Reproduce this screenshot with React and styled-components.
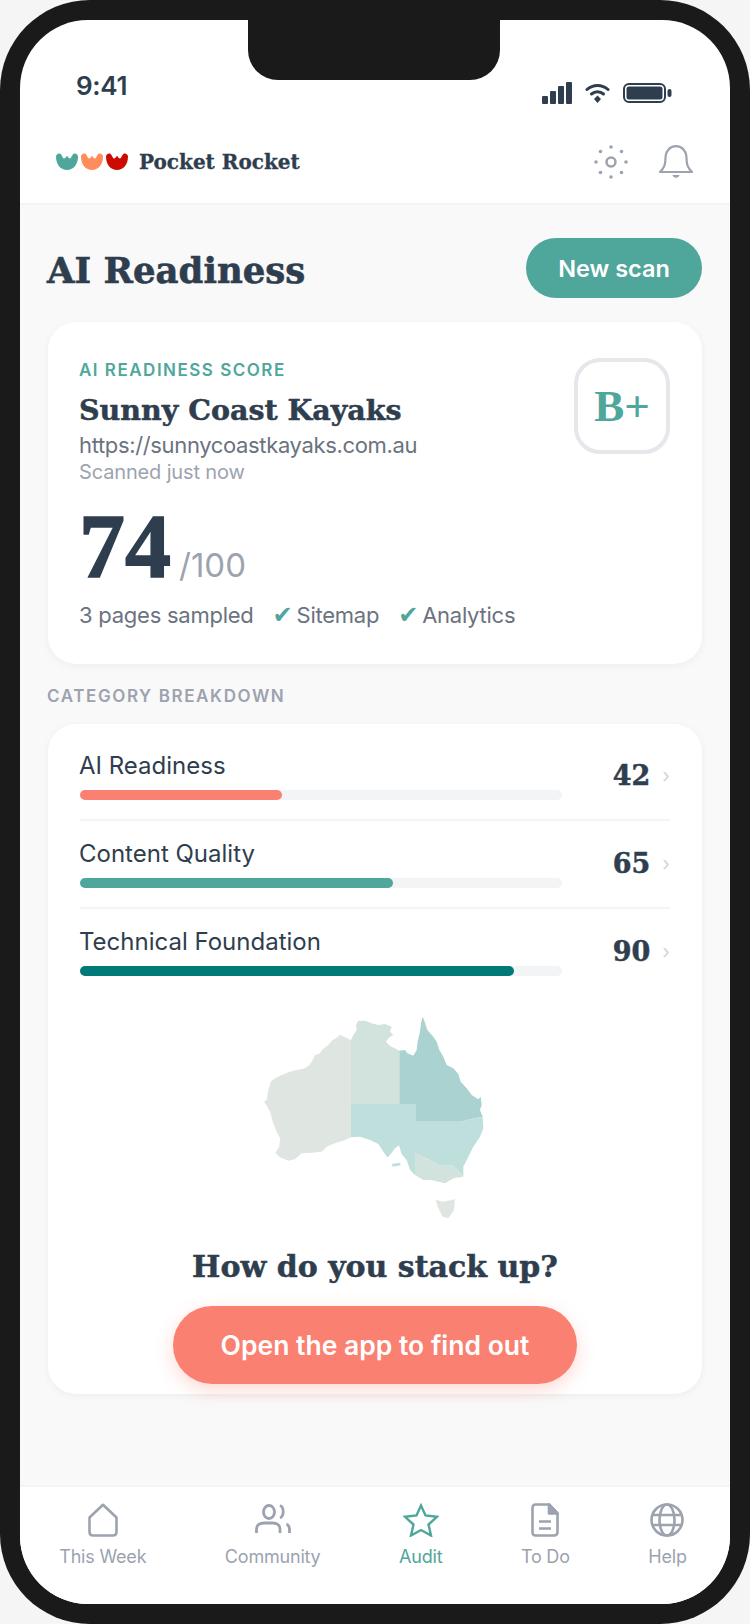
import React from 'react'
import styled, { createGlobalStyle } from 'styled-components'

const SANS = `"Inter", "Liberation Sans", sans-serif`
const SERIF = `"DejaVu Serif", "Liberation Serif", serif`
const TALL_SERIF = `"Liberation Serif", serif`
const INK = '#2f3e4e'
const TEAL = '#4fa69b'
const GRAY = '#9ca3af'

const Global = createGlobalStyle`
html, body { margin: 0; padding: 0; background: #f5f5f5; }
* { box-sizing: border-box; }
`

const Frame = styled.div`
width: 750px;
height: 1624px;
padding: 20px;
background: #1a1a1a;
border-radius: 90px;
position: relative;
`

const Notch = styled.div`
position: absolute;
top: 20px;
left: 248px;
width: 252px;
height: 60px;
background: #1a1a1a;
border-radius: 0 0 30px 30px;
`

const Screen = styled.div`
height: 100%;
background: #fff;
border-radius: 68px;
overflow: hidden;
display: flex;
flex-direction: column;
font-family: ${SANS};
color: ${INK};
`

const StatusBar = styled.div`
height: 100px;
flex: none;
display: flex;
justify-content: space-between;
align-items: flex-start;
padding: 50px 58px 0 56px;
`

const Time = styled.div`
font-size: 26px;
font-weight: 600;
line-height: 32px;
letter-spacing: -0.3px;
`

const StatusIcons = styled.div`
display: flex;
align-items: center;
gap: 13px;
margin-top: 12px;
height: 22px;
`

const Header = styled.header`
height: 85px;
flex: none;
display: flex;
align-items: center;
justify-content: space-between;
padding: 0 36px;
border-bottom: 2px solid #f3f4f6;
`

const Brand = styled.div`
display: flex;
align-items: center;
gap: 3px;
`

const BrandName = styled.span`
font-family: ${SERIF};
font-weight: 700;
font-size: 20px;
margin-left: 8px;
-webkit-text-stroke: 0.3px ${INK};
`

const HeaderIcons = styled.div`
display: flex;
align-items: center;
gap: 30px;
`

const Main = styled.main`
flex: 1;
background: #f9f9f9;
padding: 33px 28px 0;
`

const TitleRow = styled.div`
display: flex;
justify-content: space-between;
align-items: center;
`

const PageTitle = styled.h1`
margin: 5px 0 0 -1px;
font-family: ${SERIF};
font-size: 35.500px;
font-weight: 700;
line-height: 50px;
-webkit-text-stroke: 0.6px ${INK};
`

const ScanButton = styled.button`
width: 176px;
height: 60px;
border: none;
border-radius: 30px;
background: ${TEAL};
color: #fff;
font-family: ${SANS};
font-size: 23.500px;
font-weight: 600;
`

const Card = styled.section`
background: #fff;
border-radius: 28px;
box-shadow: 0 2px 8px rgba(0, 0, 0, 0.05);
`

const ScoreCard = styled(Card)`
margin-top: 24px;
height: 342px;
padding: 36px 32px 0 31px;
`

const ScoreTop = styled.div`
display: flex;
justify-content: space-between;
align-items: flex-start;
`

const Eyebrow = styled.div`
color: ${TEAL};
font-size: 17px;
font-weight: 600;
letter-spacing: 1.500px;
line-height: 24px;
`

const SiteName = styled.h2`
margin: 8px 0 0;
font-family: ${SERIF};
font-size: 28.500px;
font-weight: 700;
line-height: 40px;
-webkit-text-stroke: 0.5px ${INK};
`

const SiteUrl = styled.div`
color: #6b7280;
font-size: 22px;
letter-spacing: -0.35px;
line-height: 30px;
`

const Scanned = styled.div`
color: ${GRAY};
font-size: 20px;
letter-spacing: -0.15px;
line-height: 24px;
`

const Grade = styled.div`
width: 96px;
height: 96px;
flex: none;
display: flex;
align-items: center;
justify-content: center;
border: 4px solid #e5e7eb;
border-radius: 26px;
color: ${TEAL};
font-family: ${TALL_SERIF};
font-size: 45px;
font-weight: 700;
`

const ScoreLine = styled.div`
display: flex;
align-items: baseline;
gap: 8px;
margin-top: 18px;
height: 88px;
`

const ScoreValue = styled.span`
font-family: ${TALL_SERIF};
font-size: 92px;
font-weight: 700;
line-height: 88px;
-webkit-text-stroke: 1.500px ${INK};
`

const ScoreMax = styled.span`
color: ${GRAY};
font-size: 33px;
`

const Facts = styled.div`
display: flex;
gap: 22px;
margin-top: 10px;
color: #6b7280;
font-size: 22px;
letter-spacing: -0.25px;
line-height: 30px;
`

const Fact = styled.span`
display: inline-flex;
align-items: center;
`

const Check = styled.span`
color: ${TEAL};
font-family: "DejaVu Sans", sans-serif;
font-size: 24px;
width: 24px;
margin-left: -3px;
`

const SectionLabel = styled.div`
margin: 20px 0 16px -1px;
color: ${GRAY};
font-size: 17px;
font-weight: 600;
letter-spacing: 1.600px;
line-height: 24px;
`

const BreakdownCard = styled(Card)`
height: 670px;
padding: 9px 32px 10px;
display: flex;
flex-direction: column;
align-items: center;
`

const Row = styled.div`
width: 100%;
display: flex;
align-items: center;
padding: 18px 0 19px;
border-bottom: 2px solid ${props => (props.$last ? 'transparent' : '#f3f4f6')};
`

const RowMain = styled.div`
width: 482px;
flex: none;
`

const RowLabel = styled.div`
margin-left: -1px;
font-size: 24px;
line-height: 30px;
`

const Track = styled.div`
height: 10px;
margin-top: 9px;
background: #f3f4f6;
border-radius: 5px;
`

const Fill = styled.div`
height: 100%;
border-radius: 5px;
background: ${props => props.$color};
`

const RowScore = styled.div`
margin-left: auto;
font-family: ${SERIF};
font-size: 27px;
font-weight: 700;
-webkit-text-stroke: 0.5px ${INK};
`

const Chevron = styled.span`
margin-left: 12px;
color: #d1d5db;
font-size: 20px;
`

const AuMap = styled.svg`
display: block;
margin-top: 3px;
flex: none;
`

const StackTitle = styled.h3`
margin: 14px 0 0;
font-family: ${SERIF};
font-size: 30px;
font-weight: 700;
line-height: 46px;
-webkit-text-stroke: 0.5px ${INK};
`

const OpenButton = styled.button`
width: 404px;
height: 78px;
margin-top: 16px;
border: none;
border-radius: 39px;
background: #fa8072;
color: #fff;
font-family: ${SANS};
font-size: 26.500px;
font-weight: 600;
box-shadow: 0 6px 18px rgba(250, 128, 114, 0.3);
`

const TabBar = styled.nav`
height: 119px;
flex: none;
display: flex;
justify-content: space-around;
align-items: flex-start;
padding: 16px 4px 0 0;
background: #fff;
border-top: 2px solid #f3f4f6;
`

const Tab = styled.div`
display: flex;
flex-direction: column;
align-items: center;
gap: 8px;
font-size: 18px;
letter-spacing: -0.2px;
line-height: 24px;
color: ${props => (props.$active ? TEAL : GRAY)};
`

const Tulip = ({ color }) => (
  <svg width="22" height="17" viewBox="0 0 22 17">
    <path fill={color} d="M0 3.500C0 1.500 2 0 4 .5 6 1.500 6.500 5 8 5.500 9.500 5.500 10 3.500 11 3 12 3.500 12.500 5.500 14 5.500 15.500 5 16 1.500 18 .5 20 0 22 1.500 22 3.500 22 12 17 17 11 17 5 17 0 12 0 3.500Z" />
  </svg>
)

const SignalIcon = () => (
  <svg width="30" height="22" viewBox="0 0 30 22" fill={INK}>
    <rect x="0" y="14" width="6" height="8" rx="1" />
    <rect x="8" y="9" width="6" height="13" rx="1" />
    <rect x="16" y="4" width="6" height="18" rx="1" />
    <rect x="24" y="0" width="6" height="22" rx="1" />
  </svg>
)

const WifiIcon = () => (
  <svg width="25" height="20" viewBox="0 0 25 20" fill="none" stroke={INK} strokeWidth="3" strokeLinecap="round">
    <path d="M2 6.500C8 1 17 1 23 6.500" />
    <path d="M6.500 11C10 8 15 8 18.500 11" />
    <path fill={INK} stroke="none" d="M12.500 12.500 16 16 12.500 20 9 16Z" />
  </svg>
)

const BatteryIcon = () => (
  <svg width="49" height="20" viewBox="0 0 49 20">
    <rect x="1" y="1" width="41" height="18" rx="5" fill="none" stroke={INK} strokeWidth="2" />
    <rect x="3.500" y="3.500" width="36" height="13" rx="2.500" fill={INK} />
    <rect x="44.500" y="6" width="4" height="8" rx="2" fill={INK} />
  </svg>
)

const SunIcon = () => (
  <svg width="34" height="34" viewBox="0 0 34 34" fill={GRAY}>
    <circle cx="17" cy="17" r="4.500" fill="none" stroke={GRAY} strokeWidth="2.500" />
    <circle cx="17" cy="2" r="1.800" />
    <circle cx="17" cy="32" r="1.800" />
    <circle cx="2" cy="17" r="1.800" />
    <circle cx="32" cy="17" r="1.800" />
    <circle cx="6.500" cy="6.500" r="1.800" />
    <circle cx="27.500" cy="6.500" r="1.800" />
    <circle cx="6.500" cy="27.500" r="1.800" />
    <circle cx="27.500" cy="27.500" r="1.800" />
  </svg>
)

const BellIcon = () => (
  <svg width="36" height="34" viewBox="0 0 36 34" fill="none" stroke={GRAY} strokeWidth="2.200" strokeLinejoin="round">
    <path d="M2 27C6 23 7.500 20 7.500 13 7.500 6 12 1.200 18 1.200S28.500 6 28.500 13C28.500 20 30 23 34 27Z" />
    <path fill={GRAY} stroke="none" d="M14.500 30H21.500C21 33.500 15 33.500 14.500 30Z" />
  </svg>
)

const HomeIcon = ({ color }) => (
  <svg width="30" height="34" viewBox="0 0 30 34" fill="none" stroke={color} strokeWidth="2.600" strokeLinejoin="round">
    <path d="M15 1.800 28.500 14.500V29C28.500 31.500 27.500 32.500 25 32.500H5C2.500 32.500 1.500 31.500 1.500 29V14.500Z" />
  </svg>
)

const PeopleIcon = ({ color }) => (
  <svg width="36" height="34" viewBox="0 0 36 34" fill="none" stroke={color} strokeWidth="2.800">
    <ellipse cx="14" cy="9" rx="5.500" ry="6.500" />
    <path d="M1.500 30V26C1.500 22 5 20 9 20H18C22 20 25 22 25 26V30" />
    <path d="M25 2.500C29 4 29.500 13 25 15" />
    <path d="M34.500 30V26C34.500 24 33.500 22 31.500 21" />
  </svg>
)

const StarIcon = ({ color }) => (
  <svg width="36" height="34" viewBox="0 0 36 34" fill="none" stroke={color} strokeWidth="2.400">
    <path d="M18 2.500 22.500 12.500 34 13.800 25.500 21.500 28 32.500 18 27 8 32.500 10.500 21.500 2 13.800 13.500 12.500Z" />
  </svg>
)

const DocIcon = ({ color }) => (
  <svg width="28" height="34" viewBox="0 0 28 34" fill="none" stroke={color} strokeWidth="2.600" strokeLinejoin="round">
    <path d="M4.500 1.500H18L26.500 10.500V29C26.500 31.500 25.500 32.500 23 32.500H4.500C2.500 32.500 1.500 31.500 1.500 29V5C1.500 3 2.500 1.500 4.500 1.500Z" />
    <path fill={color} d="M18 1.500V10.500H26.500Z" />
    <path d="M8 18.500H20M8 25.500H20" />
  </svg>
)

const GlobeIcon = ({ color }) => (
  <svg width="34" height="34" viewBox="0 0 34 34" fill="none" stroke={color} strokeWidth="2.600">
    <circle cx="17" cy="17" r="15.500" />
    <ellipse cx="17" cy="17" rx="7.500" ry="15.500" />
    <path d="M2 12H32M2 22H32" />
  </svg>
)

// traced by hand from the reference, in 3x coordinates
const MAP_SHAPES = [
  ['#dfe6e1', '303,120 285,112 270,104 262,112 245,122 235,135 218,148 210,160 195,165 188,180 178,195 165,205 140,210 120,215 95,225 75,235 62,245 55,270 50,300 42,305 55,325 62,340 68,365 80,395 90,415 88,440 76,458 90,472 115,482 135,478 155,460 185,458 215,455 230,440 255,430 285,420 303,412'],
  ['#d2e3de', '303,120 310,105 320,90 318,75 325,62 345,62 365,70 385,75 405,72 425,80 420,95 430,105 418,112 408,125 420,138 440,148 448,152 448,312 303,312'],
  ['#a9d2d1', '448,152 465,150 472,160 490,167 500,150 503,125 510,95 513,70 518,50 524,65 532,90 548,108 560,125 568,150 580,170 590,195 610,205 625,222 632,245 650,265 665,285 685,298 692,290 695,315 690,330 698,350 660,358 630,365 498,365 498,312 448,312'],
  ['#bfdfdd', '303,312 498,312 498,365 630,365 660,358 698,350 700,385 690,410 670,440 655,470 640,500 640,530 610,497 570,497 540,480 495,460 495,525 480,510 470,480 455,462 447,436 435,445 420,465 412,472 400,455 385,432 360,420 330,410 303,412'],
  ['#d2e3de', '495,460 540,480 570,497 610,497 640,530 610,535 585,550 565,545 545,540 520,540 495,525'],
  ['#dfe6e1', '557,600 580,605 615,598 612,630 595,655 578,650 565,625'],
  ['#bfdfdd', '425,492 450,488 452,496 428,500'],
]

const categories = [
  { name: 'AI Readiness', score: 42, color: '#fa8072' },
  { name: 'Content Quality', score: 65, color: TEAL },
  { name: 'Technical Foundation', score: 90, color: '#007a78' },
]

const tabs = [
  { label: 'This Week', Icon: HomeIcon },
  { label: 'Community', Icon: PeopleIcon },
  { label: 'Audit', Icon: StarIcon, active: true },
  { label: 'To Do', Icon: DocIcon },
  { label: 'Help', Icon: GlobeIcon },
]

const App = () => (
  <>
    <Global />
    <Frame>
      <Screen>
        <StatusBar>
          <Time>9:41</Time>
          <StatusIcons>
            <SignalIcon />
            <WifiIcon />
            <BatteryIcon />
          </StatusIcons>
        </StatusBar>
        <Header>
          <Brand>
            <Tulip color={TEAL} />
            <Tulip color="#ff8c5a" />
            <Tulip color="#cc0a00" />
            <BrandName>Pocket Rocket</BrandName>
          </Brand>
          <HeaderIcons>
            <SunIcon />
            <BellIcon />
          </HeaderIcons>
        </Header>
        <Main>
          <TitleRow>
            <PageTitle>AI Readiness</PageTitle>
            <ScanButton>New scan</ScanButton>
          </TitleRow>
          <ScoreCard>
            <ScoreTop>
              <div>
                <Eyebrow>AI READINESS SCORE</Eyebrow>
                <SiteName>Sunny Coast Kayaks</SiteName>
                <SiteUrl>https://sunnycoastkayaks.com.au</SiteUrl>
                <Scanned>Scanned just now</Scanned>
              </div>
              <Grade>B+</Grade>
            </ScoreTop>
            <ScoreLine>
              <ScoreValue>74</ScoreValue>
              <ScoreMax>/100</ScoreMax>
            </ScoreLine>
            <Facts>
              <Fact>3 pages sampled</Fact>
              <Fact><Check>✔</Check>Sitemap</Fact>
              <Fact><Check>✔</Check>Analytics</Fact>
            </Facts>
          </ScoreCard>
          <SectionLabel>CATEGORY BREAKDOWN</SectionLabel>
          <BreakdownCard>
            {categories.map((c, i) => (
              <Row key={c.name} $last={i === categories.length - 1}>
                <RowMain>
                  <RowLabel>{c.name}</RowLabel>
                  <Track>
                    <Fill $color={c.color} style={{ width: `${c.score}%` }} />
                  </Track>
                </RowMain>
                <RowScore>{c.score}</RowScore>
                <Chevron>›</Chevron>
              </Row>
            ))}
            <AuMap width="250" height="230" viewBox="0 0 750 690">
              {MAP_SHAPES.map(([fill, points]) => (
                <polygon key={points} fill={fill} points={points} />
              ))}
            </AuMap>
            <StackTitle>How do you stack up?</StackTitle>
            <OpenButton>Open the app to find out</OpenButton>
          </BreakdownCard>
        </Main>
        <TabBar>
          {tabs.map(({ label, Icon, active }) => (
            <Tab key={label} $active={active}>
              <Icon color={active ? TEAL : GRAY} />
              {label}
            </Tab>
          ))}
        </TabBar>
      </Screen>
      <Notch />
    </Frame>
  </>
)

export default App
